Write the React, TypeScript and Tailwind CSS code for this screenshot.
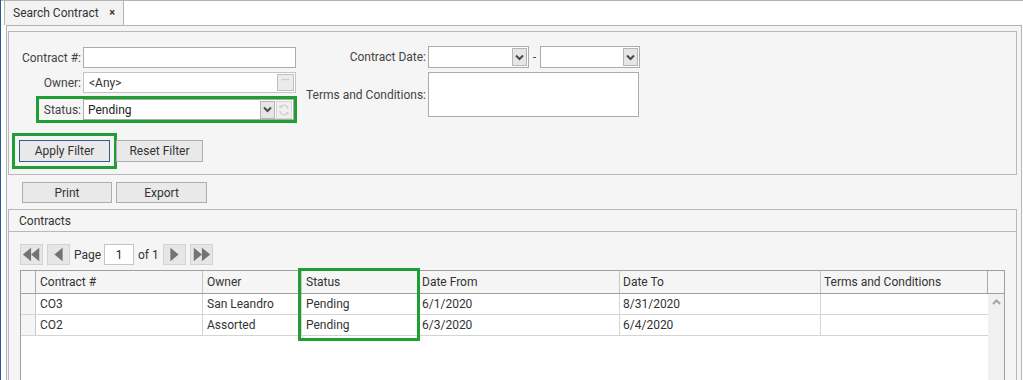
import React from 'react';

const Chevron = () => (
  <svg width="9" height="7" viewBox="0 0 9 7">
    <polyline points="1,1.5 4.5,5 8,1.5" fill="none" stroke="#4a4a4a" strokeWidth="2" />
  </svg>
);

const DropButton = () => (
  <div className="w-[15px] h-[18px] border border-[#b5b5b5] bg-[#e6e6e6] flex items-center justify-center">
    <Chevron />
  </div>
);

const RefreshIcon = () => (
  <svg width="12" height="12" viewBox="0 0 12 12">
    <path d="M10 5a4 4 0 0 0-7.2-2.2" fill="none" stroke="#cfcfcf" strokeWidth="1.4" />
    <path d="M2 7a4 4 0 0 0 7.2 2.2" fill="none" stroke="#cfcfcf" strokeWidth="1.4" />
    <polygon points="1.5,1 4.5,3.2 1.5,4.5" fill="#cfcfcf" />
    <polygon points="10.5,11 7.5,8.8 10.5,7.5" fill="#cfcfcf" />
  </svg>
);

const PagerButton = ({ points }: { points: string[] }) => (
  <div className="w-[23px] h-[21px] border border-[#d3d3d3] bg-[#e6e6e6] flex items-center justify-center shrink-0">
    <svg width="23" height="21" viewBox="0 0 23 21">
      {points.map((p) => (
        <polygon key={p} points={p} fill="#737373" />
      ))}
    </svg>
  </div>
);

export default function App() {
  const rows = [
    { id: 'CO3', owner: 'San Leandro', status: 'Pending', from: '6/1/2020', to: '8/31/2020' },
    { id: 'CO2', owner: 'Assorted', status: 'Pending', from: '6/3/2020', to: '6/4/2020' },
  ];

  return (
    <div className="w-[1023px] h-[380px] overflow-hidden bg-white border-l border-[#2b579a] flex flex-col text-[12px] text-[#333] font-['Segoe_UI',Roboto,sans-serif]">
      {/* tab strip */}
      <div className="h-[25px] shrink-0 border-t border-[#b4b4b4] flex">
        <div className="ml-[3px] w-[120px] h-full border-x border-[#b4b4b4] bg-[#f3f3f3] flex items-center justify-between pl-[8px] pr-[8px]">
          <span className="text-[#333]">Search Contract</span>
          <span className="text-[11px] text-[#333] font-bold">×</span>
        </div>
      </div>

      {/* content */}
      <div className="ml-[5px] mr-[1px] flex-1 border border-[#b4b4b4] bg-[#f5f5f5] pl-[1px] pr-[4px] pt-[5px] flex flex-col">
        {/* filter panel */}
        <div className="h-[144px] shrink-0 border border-[#b9b9b9] flex">
          <div className="flex flex-col pt-[15px] w-[288px] shrink-0">
            <div className="flex items-center h-[21px]">
              <span className="w-[72px] text-right text-[#444]">Contract #:</span>
              <div className="ml-[2px] w-[213px] h-[21px] border border-[#ababab] bg-white" />
            </div>
            <div className="flex items-center h-[21px] mt-[4px]">
              <span className="w-[72px] text-right text-[#444]">Owner:</span>
              <div className="ml-[2px] w-[213px] h-[21px] border border-[#c4c4c4] bg-white flex items-center justify-between pl-[5px] pr-[1px]">
                <span className="text-[#333]">&lt;Any&gt;</span>
                <div className="w-[17px] h-[17px] border border-[#c0c0c0] bg-[#ebebeb] flex items-center justify-center text-[#999] text-[10px] leading-none pb-[3px]">
                  ···
                </div>
              </div>
            </div>
            <div className="mt-[3px] ml-[27px] w-[261px] h-[27px] border-[3px] border-[#1f9e35] flex items-center">
              <span className="w-[42px] text-right text-[#444]">Status:</span>
              <div className="ml-[2px] w-[211px] h-[21px] border border-[#ababab] bg-white flex items-center pl-[4px] pr-[1px]">
                <span className="flex-1 text-[#222]">Pending</span>
                <DropButton />
                <div className="ml-[1px] w-[16px] h-[18px] border border-[#d6d6d6] bg-[#f0f0f0] flex items-center justify-center">
                  <RefreshIcon />
                </div>
              </div>
            </div>
            <div className="flex mt-[17px] pl-[10px]">
              <button className="w-[91px] h-[22px] border border-[#3a5b8f] bg-[#e9e9e9] text-[#333] outline-3 outline-[#1f9e35] outline-offset-[4px]">
                Apply Filter
              </button>
              <button className="ml-[6px] w-[87px] h-[22px] border border-[#adadad] bg-[#e9e9e9] text-[#333]">
                Reset Filter
              </button>
            </div>
          </div>

          <div className="flex flex-col pt-[14px]">
            <div className="flex items-center h-[22px]">
              <span className="w-[129px] text-right text-[#444]">Contract Date:</span>
              <div className="ml-[2px] w-[101px] h-[22px] border border-[#ababab] bg-white flex items-center justify-end pr-[1px]">
                <DropButton />
              </div>
              <span className="w-[11px] text-center text-[#444]">-</span>
              <div className="w-[100px] h-[22px] border border-[#ababab] bg-white flex items-center justify-end pr-[1px]">
                <DropButton />
              </div>
            </div>
            <div className="flex items-center mt-[4px]">
              <span className="w-[129px] text-right text-[#444]">Terms and Conditions:</span>
              <div className="ml-[2px] w-[211px] h-[45px] border border-[#ababab] bg-white" />
            </div>
          </div>
        </div>

        {/* print / export */}
        <div className="flex mt-[7px] pl-[14px] gap-[4px] shrink-0">
          <button className="w-[90px] h-[21px] border border-[#adadad] bg-[#e9e9e9] text-[#333]">Print</button>
          <button className="w-[91px] h-[21px] border border-[#adadad] bg-[#e9e9e9] text-[#333]">Export</button>
        </div>

        {/* contracts panel */}
        <div className="mt-[6px] flex-1 border border-[#b9b9b9] flex flex-col">
          <div className="h-[22px] shrink-0 border-b border-[#b9b9b9] flex items-center pl-[10px] text-[#333]">
            Contracts
          </div>
          <div className="pt-[12px] pl-[11px] flex flex-col">
            <div className="flex items-center h-[21px]">
              <PagerButton points={['2,10.5 11,3 11,18', '11,10.5 20,3 20,18']} />
              <div className="w-[4px]" />
              <PagerButton points={['7,10.5 16,3 16,18']} />
              <span className="w-[34px] pl-[4px] text-[#333]">Page</span>
              <div className="w-[30px] h-[21px] border border-[#c4c4c4] bg-white flex items-center justify-center text-[#222]">
                1
              </div>
              <span className="w-[29px] pl-[4px] text-[#333]">of 1</span>
              <PagerButton points={['16,10.5 7,3 7,18']} />
              <div className="w-[4px]" />
              <PagerButton points={['12,10.5 3,3 3,18', '21,10.5 12,3 12,18']} />
            </div>

            {/* grid */}
            <div className="mt-[5px] w-[985px] h-[200px] border border-[#a0a0a0] bg-white relative flex flex-col">
              <div className="h-[23px] shrink-0 flex bg-[#f5f5f5] border-b border-[#a0a0a0] text-[#333]">
                <div className="w-[15px] border-r border-[#a9a9a9]" />
                <div className="w-[167px] border-r border-[#c8c8c8] pl-[4px] flex items-center">Contract #</div>
                <div className="w-[99px] border-r border-[#c8c8c8] pl-[4px] flex items-center">Owner</div>
                <div className="w-[118px] border-r border-[#c8c8c8] pl-[4px] flex items-center">Status</div>
                <div className="w-[200px] border-r border-[#c8c8c8] pl-[2px] flex items-center">Date From</div>
                <div className="w-[201px] border-r border-[#c8c8c8] pl-[3px] flex items-center">Date To</div>
                <div className="w-[167px] border-r border-[#a9a9a9] pl-[3px] flex items-center">Terms and Conditions</div>
                <div className="w-[16px]" />
              </div>
              <div className="flex-1 flex">
                <div className="flex-1 flex flex-col">
                  {rows.map((r) => (
                    <div key={r.id} className="h-[21px] flex border-b border-[#d4d4d4] text-[#333]">
                      <div className="w-[15px] border-r border-[#c8c8c8] bg-[#f5f5f5]" />
                      <div className="w-[167px] border-r border-[#d4d4d4] pl-[4px] flex items-center">{r.id}</div>
                      <div className="w-[99px] border-r border-[#d4d4d4] pl-[4px] flex items-center">{r.owner}</div>
                      <div className="w-[118px] border-r border-[#d4d4d4] pl-[4px] flex items-center">{r.status}</div>
                      <div className="w-[200px] border-r border-[#d4d4d4] pl-[2px] flex items-center">{r.from}</div>
                      <div className="w-[201px] border-r border-[#d4d4d4] pl-[3px] flex items-center">{r.to}</div>
                      <div className="w-[167px]" />
                    </div>
                  ))}
                </div>
                <div className="w-[16px] bg-[#f0f0f0] flex justify-center pt-[5px]">
                  <svg width="9" height="6" viewBox="0 0 9 6">
                    <polyline points="1,5 4.5,1.5 8,5" fill="none" stroke="#a6a6a6" strokeWidth="2" />
                  </svg>
                </div>
              </div>
              <div className="absolute left-[277px] top-[-3px] w-[122px] h-[73px] border-[3px] border-[#1f9e35]" />
            </div>
          </div>
        </div>
      </div>
    </div>
  );
}
